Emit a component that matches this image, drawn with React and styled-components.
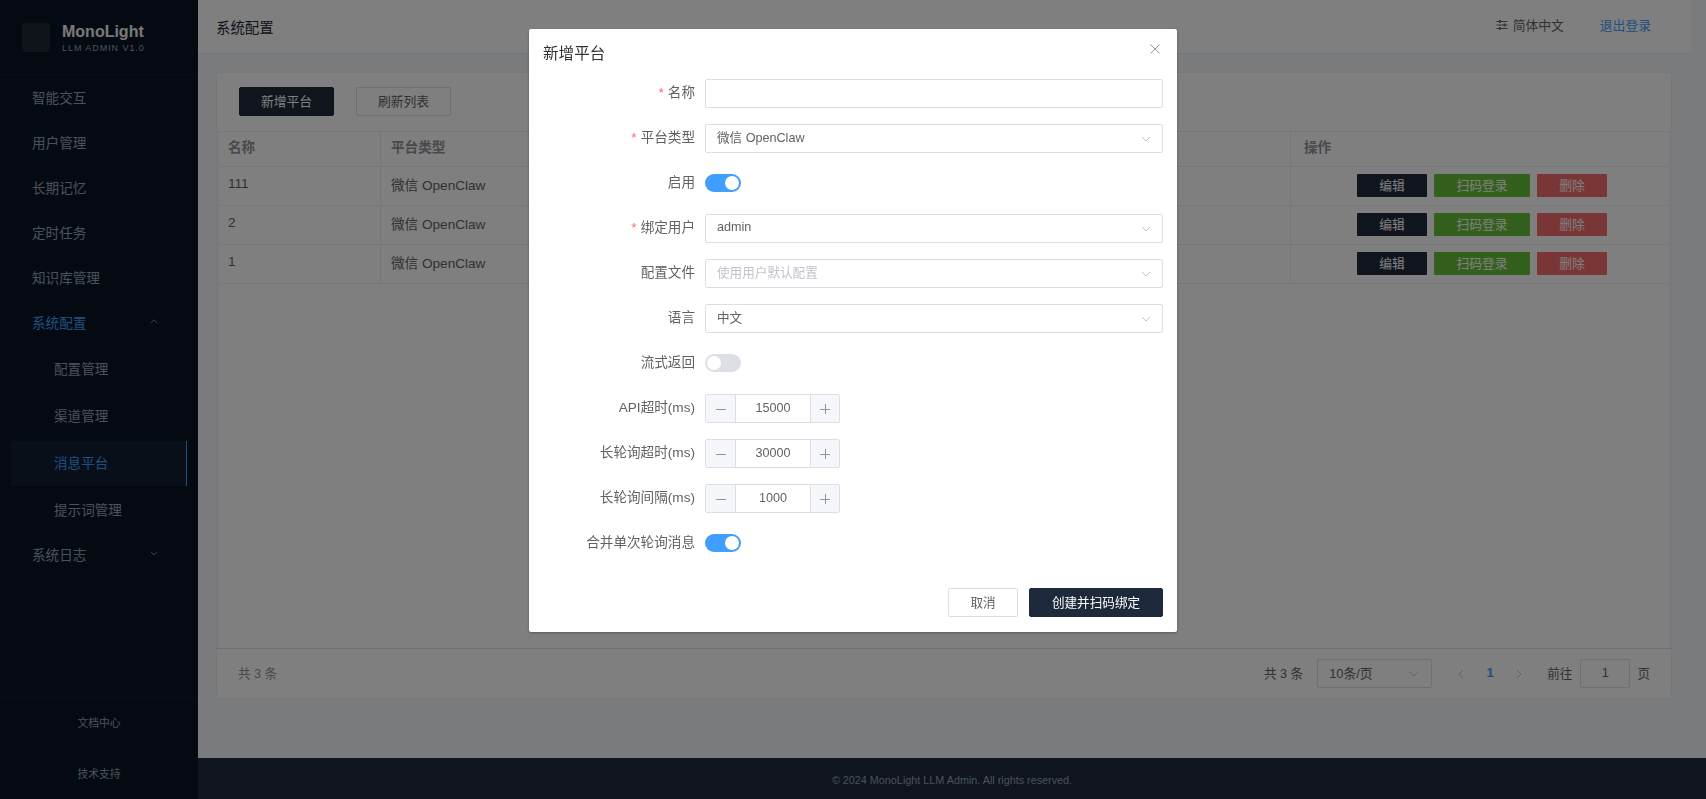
import React from "react";
import styled, { createGlobalStyle } from "styled-components";

const Global = createGlobalStyle`
  html, body { margin: 0; padding: 0; height: 100%; overflow: hidden; }
  body { font-family: "Liberation Sans", "Noto Sans CJK SC", sans-serif; font-size: 13.6px; color: #606266; }
  #root { height: 100%; }
  * { box-sizing: border-box; }
`;

const Page = styled.div`
  display: flex;
  height: 799px;
  background: #f5f7fa;
`;

/* ---------- sidebar ---------- */
const Sidebar = styled.aside`
  width: 198px;
  flex: none;
  display: flex;
  flex-direction: column;
  background: #0b1424;
`;
const Brand = styled.div`
  height: 75px;
  flex: none;
  display: flex;
  align-items: center;
  gap: 12px;
  padding: 1px 0 0 22px;
  border-bottom: 1px solid #131c2c;
`;
const LogoBox = styled.div`
  width: 28px;
  height: 29px;
  border-radius: 3px;
  background: #1e2735;
`;
const BrandText = styled.div`
  display: flex;
  flex-direction: column;
  gap: 1px;
`;
const BrandName = styled.div`
  font-size: 16px;
  line-height: 20px;
  font-weight: 700;
  color: #fff;
  opacity: 0.95;
`;
const BrandSub = styled.div`
  font-size: 9px;
  line-height: 11px;
  letter-spacing: 0.95px;
  color: #94a3b8;
`;
const Menu = styled.nav`
  flex: 1;
  display: flex;
  flex-direction: column;
  padding: 1px 11px 0;
`;
const MenuItem = styled.div`
  height: 45px;
  flex: none;
  display: flex;
  align-items: center;
  justify-content: space-between;
  padding: 0 29px 4px 21px;
  font-size: 13.6px;
  color: ${(p) => (p.$active ? "#409eff" : "#94a3b8")};
`;
const SubMenu = styled.div`
  display: flex;
  flex-direction: column;
  padding-top: 1px;
  gap: 2px;
`;
const SubItem = styled.div`
  height: 45px;
  display: flex;
  align-items: center;
  padding: 0 0 4px 43px;
  font-size: 13.6px;
  color: ${(p) => (p.$active ? "#409eff" : "#94a3b8")};
  background: ${(p) => (p.$active ? "#111e33" : "transparent")};
  border-right: 1px solid ${(p) => (p.$active ? "#409eff" : "transparent")};
`;
const SideFoot = styled.div`
  flex: none;
  height: 102px;
  display: flex;
  flex-direction: column;
  align-items: center;
  justify-content: space-between;
  padding: 15px 0 15px;
  border-top: 1px solid #131c2c;
`;
const SideLink = styled.div`
  font-size: 10.8px;
  line-height: 20px;
  color: #94a3b8;
`;

/* ---------- main ---------- */
const Main = styled.div`
  flex: 1;
  min-width: 0;
  display: flex;
  flex-direction: column;
`;
const Header = styled.header`
  height: 54px;
  flex: none;
  margin-right: 15px;
  display: flex;
  align-items: center;
  justify-content: space-between;
  padding: 0 40px 4px 18px;
  background: #fff;
  border-bottom: 1px solid #e8eaee;
`;
const PageTitle = styled.div`
  font-size: 14.4px;
  color: #1e293b;
  padding-top: 3px;
`;
const HeaderRight = styled.div`
  display: flex;
  align-items: center;
`;
const Lang = styled.div`
  display: flex;
  align-items: center;
  gap: 5px;
  font-size: 12.8px;
  color: #606266;
  margin-right: 36px;
`;
const Logout = styled.a`
  font-size: 12.8px;
  color: #409eff;
`;
const Content = styled.div`
  flex: 1;
  min-height: 0;
  padding: 18px 34px 0 18px;
`;
const Card = styled.section`
  height: 627px;
  display: flex;
  flex-direction: column;
  background: #fff;
  border: 1px solid #ebeef5;
  border-radius: 4px;
`;
const Toolbar = styled.div`
  height: 58px;
  flex: none;
  display: flex;
  align-items: center;
  gap: 22px;
  padding: 0 0 1px 22px;
`;
const ToolButton = styled.button`
  width: 95px;
  height: 29px;
  padding: 0 0 3px;
  font: inherit;
  font-size: 12.8px;
  border-radius: 2px;
  color: ${(p) => (p.$primary ? "#fff" : "#606266")};
  background: ${(p) => (p.$primary ? "#1e293b" : "#fff")};
  border: 1px solid ${(p) => (p.$primary ? "#1e293b" : "#dcdfe6")};
`;
const TableWrap = styled.div`
  flex: 1;
  margin: 0 1px;
  min-height: 0;
  border-top: 1px solid #ebeef5;
  border-right: 1px solid #ebeef5;
  border-left: 1px solid #ebeef5;
`;
const Row = styled.div`
  display: grid;
  grid-template-columns: 162px 1fr 378px;
  height: ${(p) => (p.$head ? "35px" : "39px")};
  border-bottom: 1px solid #ebeef5;
`;
const Cell = styled.div`
  display: flex;
  align-items: center;
  padding: ${(p) => (p.$head ? "0 9px 6px" : "0 9px 5px 9px")};
  font-size: 13.6px;
  font-weight: ${(p) => (p.$head ? 700 : 400)};
  color: ${(p) => (p.$head ? "#909399" : "#606266")};
  border-right: 1px solid #ebeef5;
  &:nth-child(2) { padding-left: 10px; }
  &:last-child { border-right: 0; padding-left: 13px; padding-bottom: ${(p) => (p.$head ? "6px" : "1px")}; }
`;
const Actions = styled.div`
  height: 100%;
  display: flex;
  align-items: center;
  gap: 7px;
  padding: 0 0 0 53px;
`;
const RowBtn = styled.button`
  width: ${(p) => p.$w}px;
  height: 23px;
  padding: 0 0 2px;
  font: inherit;
  font-size: 12.8px;
  color: #fff;
  background: ${(p) => p.$bg};
  border: 0;
  border-radius: 1px;
`;
const Pager = styled.div`
  height: 50px;
  flex: none;
  display: flex;
  align-items: center;
  justify-content: space-between;
  padding: 0 21px;
  border-top: 1px solid #dfe2ea;
  font-size: 12.8px;
`;
const Total = styled.div`
  font-size: 12.6px;
  padding-bottom: 2px;
  color: ${(p) => (p.$dim ? "#909399" : "#606266")};
`;
const PagerRight = styled.div`
  display: flex;
  align-items: center;
`;
const PageSize = styled.div`
  width: 115px;
  height: 29px;
  margin-left: 14px;
  display: flex;
  align-items: center;
  justify-content: space-between;
  padding: 0 12px 3px 11px;
  border: 1px solid #dcdfe6;
  border-radius: 2px;
  font-size: 12.8px;
  color: #606266;
`;
const PageNums = styled.div`
  width: 64px;
  margin: 0 25px 0 26px;
  display: flex;
  align-items: center;
  justify-content: space-between;
  color: #c0c4cc;
`;
const PageNum = styled.span`
  font-size: 13px;
  font-weight: 700;
  color: #409eff;
  padding-bottom: 3px;
`;
const Goto = styled.div`
  width: 50px;
  height: 29px;
  margin: 0 7px 0 8px;
  display: flex;
  align-items: center;
  justify-content: center;
  padding-bottom: 2px;
  border: 1px solid #dcdfe6;
  border-radius: 2px;
  font-size: 12.8px;
`;
const Footer = styled.footer`
  height: 41px;
  flex: none;
  display: flex;
  align-items: center;
  justify-content: center;
  font-size: 10.8px;
  color: #94a3b8;
  background: #1e293b;
  padding-top: 3px;
`;

/* ---------- dialog ---------- */
const Overlay = styled.div`
  position: fixed;
  inset: 0;
  display: flex;
  justify-content: center;
  align-items: flex-start;
  padding-top: 29px;
  background: rgba(0, 0, 0, 0.5);
`;
const Dialog = styled.div`
  position: relative;
  width: 648px;
  height: 603px;
  background: #fff;
  border-radius: 2px;
  box-shadow: 0 1px 3px rgba(0, 0, 0, 0.3);
  padding: 0 14px;
`;
const DialogTitle = styled.div`
  height: 50px;
  padding-top: 14px;
  font-size: 15.6px;
  line-height: 22px;
  color: #303133;
`;
const Close = styled.button`
  position: absolute;
  top: 14px;
  right: 16px;
  width: 12px;
  height: 12px;
  padding: 0;
  display: flex;
  border: 0;
  background: none;
  color: #909399;
`;
const FormRow = styled.div`
  height: 45px;
  display: flex;
  align-items: flex-start;
  gap: 10px;
`;
const Label = styled.label`
  width: 152px;
  flex: none;
  height: 29px;
  line-height: 27px;
  text-align: right;
  font-size: 13.6px;
  color: #606266;
`;
const Star = styled.span`
  color: #f56c6c;
  margin-right: 4px;
`;
const TextInput = styled.div`
  flex: 1;
  height: 29px;
  border: 1px solid #dcdfe6;
  border-radius: 2px;
`;
const Select = styled(TextInput)`
  display: flex;
  align-items: center;
  justify-content: space-between;
  padding: 0 11px 4px 11px;
  font-size: 12.6px;
  color: ${(p) => (p.$placeholder ? "#c0c4cc" : "#606266")};
`;
const ArrowSlot = styled.span`
  display: flex;
  margin-top: 4px;
`;
const Toggle = styled.div`
  position: relative;
  width: 36px;
  height: 18px;
  margin-top: 5px;
  border-radius: 9px;
  background: ${(p) => (p.$on ? "#409eff" : "#dcdfe6")};
  &::after {
    content: "";
    position: absolute;
    top: 2px;
    left: ${(p) => (p.$on ? "20px" : "2px")};
    width: 14px;
    height: 14px;
    border-radius: 50%;
    background: #fff;
  }
`;
const Stepper = styled.div`
  width: 135px;
  height: 29px;
  display: flex;
  align-items: stretch;
  border: 1px solid #dcdfe6;
  border-radius: 2px;
`;
const StepBtn = styled.div`
  width: ${(p) => p.$w}px;
  flex: none;
  display: flex;
  align-items: center;
  justify-content: center;
  background: #f5f7fa;
  color: #606266;
  border-${(p) => p.$side}: 1px solid #dcdfe6;
`;
const StepValue = styled.div`
  flex: 1;
  display: flex;
  align-items: center;
  justify-content: center;
  padding-bottom: 2px;
  font-size: 12.6px;
  color: #606266;
`;
const DialogFoot = styled.div`
  display: flex;
  justify-content: flex-end;
  gap: 11px;
  margin-top: 14px;
`;
const FootBtn = styled.button`
  width: ${(p) => p.$w}px;
  height: 29px;
  padding: 0 0 2px;
  font: inherit;
  font-size: 12.6px;
  border-radius: 2px;
  color: ${(p) => (p.$primary ? "#fff" : "#606266")};
  background: ${(p) => (p.$primary ? "#1e293b" : "#fff")};
  border: 1px solid ${(p) => (p.$primary ? "#1e293b" : "#dcdfe6")};
`;

/* ---------- icons ---------- */
const Chevron = ({ dir = "down", color = "#c0c4cc", size = 10 }) => {
  const pts = {
    down: "1,1 5,5 9,1",
    up: "1,5 5,1 9,5",
  }[dir];
  return (
    <svg width={size} height={size * 0.6} viewBox="0 0 10 6" fill="none" stroke={color} strokeWidth="1">
      <polyline points={pts} />
    </svg>
  );
};
const ChevronSide = ({ dir, color = "#909399" }) => (
  <svg width="6" height="10" viewBox="0 0 6 10" fill="none" stroke={color} strokeWidth="1">
    <polyline points={dir === "left" ? "5,1 1,5 5,9" : "1,1 5,5 1,9"} />
  </svg>
);
const TuneIcon = () => (
  <svg width="12" height="12" viewBox="0 0 12 12" fill="none" stroke="#606266" strokeWidth="1">
    <path d="M0.5 2.5h11M0.5 6h11M0.5 9.5h11" />
    <path d="M4 1v3M8.5 4.5v3M4 8v3" strokeWidth="1.6" />
  </svg>
);
const CloseIcon = () => (
  <svg width="12" height="12" viewBox="0 0 12 12" fill="none" stroke="currentColor" strokeWidth="1">
    <path d="M1.5 1.5l9 9M10.5 1.5l-9 9" />
  </svg>
);
const Minus = () => (
  <svg width="10" height="10" viewBox="0 0 10 10" stroke="#909399" strokeWidth="1">
    <path d="M0 5.5h10" />
  </svg>
);
const Plus = () => (
  <svg width="10" height="10" viewBox="0 0 10 10" stroke="#909399" strokeWidth="1">
    <path d="M0 5.5h10M5.5 0v10" />
  </svg>
);

const rows = ["111", "2", "1"];

const StepperField = ({ label, value }) => (
  <FormRow>
    <Label>{label}</Label>
    <Stepper>
      <StepBtn $w={30} $side="right"><Minus /></StepBtn>
      <StepValue>{value}</StepValue>
      <StepBtn $w={29} $side="left"><Plus /></StepBtn>
    </Stepper>
  </FormRow>
);

const SelectField = ({ label, value, required, placeholder }) => (
  <FormRow>
    <Label>{required && <Star>*</Star>}{label}</Label>
    <Select $placeholder={placeholder}>
      <span>{value}</span>
      <ArrowSlot><Chevron /></ArrowSlot>
    </Select>
  </FormRow>
);

const ToggleField = ({ label, on }) => (
  <FormRow>
    <Label>{label}</Label>
    <Toggle $on={on} />
  </FormRow>
);

export default function App() {
  return (
    <>
      <Global />
      <Page>
        <Sidebar>
          <Brand>
            <LogoBox />
            <BrandText>
              <BrandName>MonoLight</BrandName>
              <BrandSub>LLM ADMIN V1.0</BrandSub>
            </BrandText>
          </Brand>
          <Menu>
            <MenuItem>智能交互</MenuItem>
            <MenuItem>用户管理</MenuItem>
            <MenuItem>长期记忆</MenuItem>
            <MenuItem>定时任务</MenuItem>
            <MenuItem>知识库管理</MenuItem>
            <MenuItem $active>系统配置<Chevron dir="up" color="#94a3b8" size={8} /></MenuItem>
            <SubMenu>
              <SubItem>配置管理</SubItem>
              <SubItem>渠道管理</SubItem>
              <SubItem $active>消息平台</SubItem>
              <SubItem>提示词管理</SubItem>
            </SubMenu>
            <MenuItem>系统日志<Chevron color="#94a3b8" size={8} /></MenuItem>
          </Menu>
          <SideFoot>
            <SideLink>文档中心</SideLink>
            <SideLink>技术支持</SideLink>
          </SideFoot>
        </Sidebar>
        <Main>
          <Header>
            <PageTitle>系统配置</PageTitle>
            <HeaderRight>
              <Lang><TuneIcon />简体中文</Lang>
              <Logout>退出登录</Logout>
            </HeaderRight>
          </Header>
          <Content>
            <Card>
              <Toolbar>
                <ToolButton $primary>新增平台</ToolButton>
                <ToolButton>刷新列表</ToolButton>
              </Toolbar>
              <TableWrap>
                <Row $head>
                  <Cell $head>名称</Cell>
                  <Cell $head>平台类型</Cell>
                  <Cell $head>操作</Cell>
                </Row>
                {rows.map((name, i) => (
                  <Row key={i}>
                    <Cell>{name}</Cell>
                    <Cell>微信 OpenClaw</Cell>
                    <Cell>
                      <Actions>
                        <RowBtn $w={70} $bg="#1e293b">编辑</RowBtn>
                        <RowBtn $w={96} $bg="#67c23a">扫码登录</RowBtn>
                        <RowBtn $w={70} $bg="#f56c6c">删除</RowBtn>
                      </Actions>
                    </Cell>
                  </Row>
                ))}
              </TableWrap>
              <Pager>
                <Total $dim>共 3 条</Total>
                <PagerRight>
                  <Total>共 3 条</Total>
                  <PageSize>
                    <span>10条/页</span>
                    <ArrowSlot><Chevron /></ArrowSlot>
                  </PageSize>
                  <PageNums>
                    <ChevronSide dir="left" color="#c0c4cc" />
                    <PageNum>1</PageNum>
                    <ChevronSide dir="right" color="#c0c4cc" />
                  </PageNums>
                  <Total>前往</Total>
                  <Goto>1</Goto>
                  <Total>页</Total>
                </PagerRight>
              </Pager>
            </Card>
          </Content>
          <Footer>© 2024 MonoLight LLM Admin. All rights reserved.</Footer>
        </Main>
      </Page>
      <Overlay>
        <Dialog>
          <DialogTitle>新增平台</DialogTitle>
          <Close><CloseIcon /></Close>
          <FormRow>
            <Label><Star>*</Star>名称</Label>
            <TextInput />
          </FormRow>
          <SelectField required label="平台类型" value="微信 OpenClaw" />
          <ToggleField label="启用" on />
          <SelectField required label="绑定用户" value="admin" />
          <SelectField label="配置文件" value="使用用户默认配置" placeholder />
          <SelectField label="语言" value="中文" />
          <ToggleField label="流式返回" />
          <StepperField label="API超时(ms)" value="15000" />
          <StepperField label="长轮询超时(ms)" value="30000" />
          <StepperField label="长轮询间隔(ms)" value="1000" />
          <ToggleField label="合并单次轮询消息" on />
          <DialogFoot>
            <FootBtn $w={70}>取消</FootBtn>
            <FootBtn $w={134} $primary>创建并扫码绑定</FootBtn>
          </DialogFoot>
        </Dialog>
      </Overlay>
    </>
  );
}
